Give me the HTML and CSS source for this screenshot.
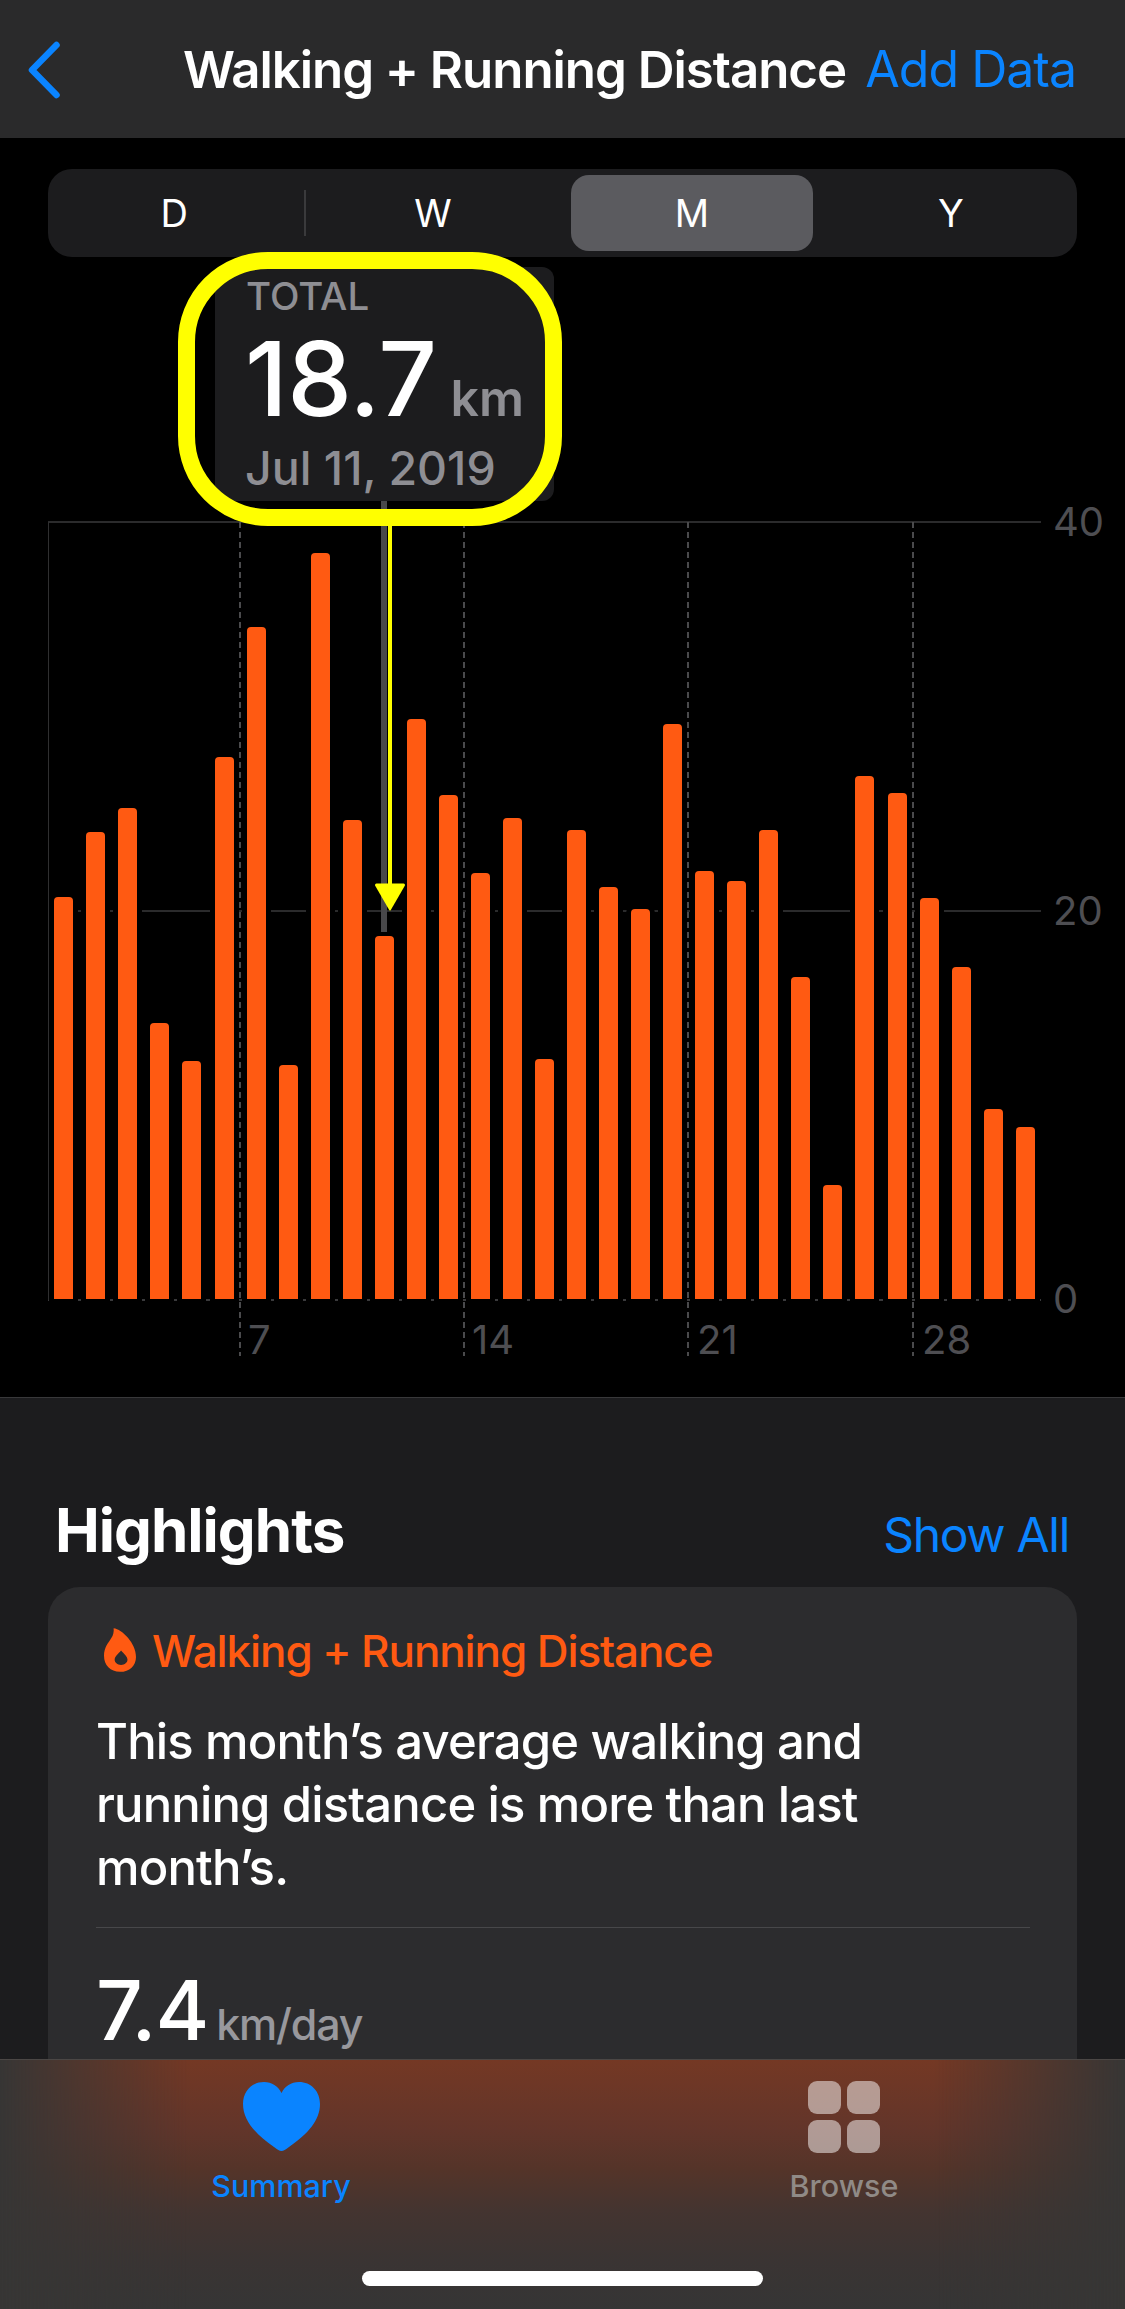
FILE: index.html
```html
<!DOCTYPE html>
<html lang="en">
<head>
<meta charset="utf-8">
<title>Walking + Running Distance</title>
<link rel="stylesheet" href="styles.css">
</head>
<body>
<div class="screen">
  <header class="nav">
    <svg class="back" viewBox="0 0 34 58" aria-hidden="true"><path d="M29.5 4 L5 29 L29.5 54"/></svg>
    <h1 class="nav-title">Walking + Running Distance</h1>
    <a class="nav-action">Add Data</a>
  </header>

  <section class="chart-area">
    <div class="segments">
      <span class="seg">D</span>
      <span class="seg">W</span>
      <span class="seg seg-on">M</span>
      <span class="seg">Y</span>
      <i class="seg-sep"></i>
    </div>

    <div class="tooltip">
      <div class="tip-label">TOTAL</div>
      <div class="tip-value"><span class="tip-num">18.7</span><span class="tip-unit">km</span></div>
      <div class="tip-date">Jul 11, 2019</div>
    </div>
    <div class="ring"></div>

    <div class="plot">
      <i class="hline hline-top"></i>
      <i class="hline hline-mid"></i>
      <i class="hline hline-base"></i>
      <i class="yaxis"></i>
      <div class="bars">
        <b class="bar" style="height:402px"></b>
        <b class="bar" style="height:467px"></b>
        <b class="bar" style="height:491px"></b>
        <b class="bar" style="height:276px"></b>
        <b class="bar" style="height:238px"></b>
        <b class="bar" style="height:542px"></b>
        <b class="bar" style="height:672px"></b>
        <b class="bar" style="height:234px"></b>
        <b class="bar" style="height:746px"></b>
        <b class="bar" style="height:479px"></b>
        <b class="bar" style="height:363px"></b>
        <b class="bar" style="height:580px"></b>
        <b class="bar" style="height:504px"></b>
        <b class="bar" style="height:426px"></b>
        <b class="bar" style="height:481px"></b>
        <b class="bar" style="height:240px"></b>
        <b class="bar" style="height:469px"></b>
        <b class="bar" style="height:412px"></b>
        <b class="bar" style="height:390px"></b>
        <b class="bar" style="height:575px"></b>
        <b class="bar" style="height:428px"></b>
        <b class="bar" style="height:418px"></b>
        <b class="bar" style="height:469px"></b>
        <b class="bar" style="height:322px"></b>
        <b class="bar" style="height:114px"></b>
        <b class="bar" style="height:523px"></b>
        <b class="bar" style="height:506px"></b>
        <b class="bar" style="height:401px"></b>
        <b class="bar" style="height:332px"></b>
        <b class="bar" style="height:190px"></b>
        <b class="bar" style="height:172px"></b>
      </div>
      <i class="vline v7"></i>
      <i class="vline v14"></i>
      <i class="vline v21"></i>
      <i class="vline v28"></i>
      <span class="ylabel y40">40</span>
      <span class="ylabel y20">20</span>
      <span class="ylabel y0">0</span>
      <span class="xlabel x7">7</span>
      <span class="xlabel x14">14</span>
      <span class="xlabel x21">21</span>
      <span class="xlabel x28">28</span>
      <i class="cursor"></i>
      <svg class="arrow" viewBox="0 0 32 386" aria-hidden="true">
        <rect x="14" y="0" width="4" height="362"/>
        <path d="M2.5 357.5 H29.5 a1.5 1.5 0 0 1 1.3 2.2 L16.8 384 a1 1 0 0 1 -1.6 0 L1.2 359.7 a1.5 1.5 0 0 1 1.3 -2.2 Z"/>
      </svg>
    </div>
  </section>

  <section class="content">
    <div class="section-head">
      <h2 class="section-title">Highlights</h2>
      <a class="section-link">Show All</a>
    </div>
    <article class="card">
      <div class="card-head">
        <svg class="flame" viewBox="0 0 30 41" aria-hidden="true"><path fill-rule="evenodd" d="M9 0 C17 1 30 14 30 27 C30 35 24 41 15 41 C6 41 0 35 0 26 C0 18 4 14 7 9 C8.500 7 9.500 3 9 0 Z M16 21 C13.500 24 10 26.500 10 29.500 C10 32.500 12.500 34.500 16 34.500 C19.500 34.500 22 32.500 22 29.500 C22 26.500 18.500 24 16 21 Z"/></svg>
        <span class="card-kicker">Walking + Running Distance</span>
      </div>
      <p class="card-text">This month’s average walking and running distance is more than last month’s.</p>
      <hr class="card-rule">
      <div class="stat"><span class="stat-num">7.4</span><span class="stat-unit">km/day</span></div>
    </article>
  </section>

  <nav class="tabbar">
    <a class="tab tab-on">
      <svg class="tab-icon heart" viewBox="0 0 77 69" aria-hidden="true"><path d="M38.500 69 C36.500 69 34.500 67.500 31 65 C12 52 0 38 0 22 C0 9 9 0 21 0 C29 0 35 4 38.500 11 C42 4 48 0 56 0 C68 0 77 9 77 22 C77 38 65 52 46 65 C42.500 67.500 40.500 69 38.500 69 Z"/></svg>
      <span class="tab-label">Summary</span>
    </a>
    <a class="tab tab-browse">
      <span class="tab-icon tiles"><i></i><i></i><i></i><i></i></span>
      <span class="tab-label">Browse</span>
    </a>
    <span class="home-bar"></span>
  </nav>
</div>
</body>
</html>
```
FILE: styles.css
```css
* { box-sizing: border-box; }
html, body { margin: 0; padding: 0; background: #000; }
body { font-family: Inter, "Liberation Sans", sans-serif; color: #fff; }
i, b { display: block; }
h1, h2, p { margin: 0; }

.screen {
  width: 1125px;
  height: 2309px;
  display: flex;
  flex-direction: column;
  overflow: hidden;
}

/* navigation */
.nav {
  flex: none;
  height: 138px;
  background: #2a2a2b;
  display: flex;
  align-items: center;
  padding: 0 49px 0 27px;
}
.back { width: 34px; height: 58px; flex: none; margin-top: 1px; }
.back path { fill: none; stroke: #0a84ff; stroke-width: 6.5; stroke-linecap: round; stroke-linejoin: round; }
.nav-title {
  font-size: 51px;
  font-weight: 600;
  margin-left: 122px;
  white-space: nowrap;
  letter-spacing: -1.05px;
}
.nav-action { margin-left: auto; font-size: 50px; letter-spacing: -1px; color: #0a84ff; white-space: nowrap; }

/* chart */
.chart-area {
  flex: none;
  height: 1259px;
  background: #000;
  position: relative;
  padding: 31px 48px 0;
}
.segments {
  height: 88px;
  background: #1c1c1e;
  border-radius: 24px;
  display: flex;
  align-items: center;
  gap: 16.500px;
  padding: 0 5px;
  position: relative;
}
.seg {
  flex: 1;
  font-size: 38px;
  text-align: center;
  line-height: 76px;
  height: 76px;
  border-radius: 18px;
}
.seg-on { background: #5b5b5f; }
.seg-sep { position: absolute; left: 256px; top: 21px; width: 2px; height: 46px; background: #3a3a3c; }

.tooltip {
  position: absolute;
  left: 215px;
  top: 129px;
  width: 339px;
  height: 234px;
  background: #1c1c1e;
  border-radius: 12px;
  padding: 7px 0 0 30px;
}
.tip-label { font-size: 38.500px; font-weight: 500; color: #8e8e93; line-height: 44px; margin-left: 1px; }
.tip-value { display: flex; align-items: baseline; line-height: 96px; margin-top: 13px; }
.tip-num { font-size: 103px; font-weight: 500; letter-spacing: -0.5px; }
.tip-unit { font-size: 50px; font-weight: 600; color: #8e8e93; margin-left: 14px; }
.tip-date { font-size: 46.500px; font-weight: 500; color: #8e8e93; line-height: 44px; }
.ring {
  position: absolute;
  left: 178px;
  top: 114px;
  width: 384px;
  height: 274px;
  border: 17px solid #ffff00;
  border-radius: 90px;
  z-index: 3;
}

.plot {
  position: relative;
  margin-top: 265px;
  width: 993px;
  height: 777px;
}
.bars {
  position: relative;
  z-index: 1;
  height: 777px;
  display: flex;
  align-items: flex-end;
  gap: 13.05px;
  padding-left: 6.300px;
}
.bar {
  width: 19px;
  flex: none;
  background: #ff5a12;
  border-radius: 4px 4px 0 0;
  box-shadow: 0 0 0 5px #000;
}
.hline { position: absolute; left: 0; width: 993px; height: 2px; background: #2b2b2c; z-index: 0; }
.hline-top { top: -1px; }
.hline-mid { top: 388px; }
.hline-base { top: 777px; background: #3a3a3c; }
.yaxis { position: absolute; left: 0; top: 0; width: 1px; height: 778px; background: #2f2f30; z-index: 2; }
.vline {
  position: absolute;
  top: 0;
  width: 2px;
  height: 834px;
  z-index: 2;
  background: repeating-linear-gradient(to bottom, #4a4a4c 0, #4a4a4c 6px, transparent 6px, transparent 10px);
}
.v7 { left: 191px; }
.v14 { left: 415px; }
.v21 { left: 639px; }
.v28 { left: 864px; }
.ylabel, .xlabel { position: absolute; font-size: 40px; line-height: 44px; color: #4e4e52; }
.ylabel { left: 1005px; }
.y40 { top: -22px; }
.y20 { top: 367px; }
.y0 { top: 755px; }
.xlabel { top: 796px; }
.x7 { left: 200px; }
.x14 { left: 424px; }
.x21 { left: 649px; }
.x28 { left: 874px; }

.cursor { position: absolute; left: 333px; top: -21px; width: 6px; height: 431px; background: #48484a; z-index: 2; }
.arrow { position: absolute; left: 326px; top: 4px; width: 32px; height: 386px; z-index: 4; fill: #ffff00; }

/* highlights */
.content {
  flex: 1;
  min-height: 0;
  overflow: hidden;
  background: #1c1c1e;
  border-top: 1px solid #38383a;
  padding: 0 48px;
}
.section-head {
  display: flex;
  justify-content: space-between;
  align-items: baseline;
  height: 189px;
  padding: 97px 8px 0 7px;
}
.section-title { font-size: 60px; font-weight: 700; letter-spacing: -1px; line-height: 70px; }
.section-link { font-size: 48px; letter-spacing: -1.300px; color: #0a84ff; }
.card {
  background: #2c2c2e;
  border-radius: 32px;
  padding: 38px 47px 0 48px;
  height: 600px;
}
.card-head { display: flex; align-items: center; height: 52px; }
.flame { width: 32px; height: 44px; fill: #ff5a12; flex: none; margin: -2px 0 0 8px; }
.card-kicker { font-size: 44px; font-weight: 500; letter-spacing: -1.100px; color: #ff5a12; margin-left: 16px; white-space: nowrap; }
.card-text { font-size: 49px; font-weight: 500; letter-spacing: -0.85px; line-height: 63px; margin-top: 33px; }
.card-rule { border: 0; height: 1px; background: #48484a; margin: 28px 0 0; }
.stat { display: flex; align-items: baseline; margin-top: 35px; line-height: 96px; }
.stat-num { font-size: 82px; font-weight: 500; letter-spacing: -1px; }
.stat-unit { font-size: 43px; font-weight: 500; letter-spacing: -1.200px; color: #98989d; margin-left: 8px; }

/* tab bar */
.tabbar {
  flex: none;
  height: 250px;
  position: relative;
  overflow: hidden;
  background: #373635;
  border-top: 1px solid #4b4745;
  display: flex;
}
.tabbar::before {
  content: "";
  position: absolute;
  inset: 0;
  background: linear-gradient(to bottom, #743824 0, #62352a 70px, #543429 110px, #443430 150px, #3a3433 200px, #353535 250px);
  -webkit-mask-image: linear-gradient(to right, transparent 0, #000 17%, #000 83%, transparent 100%);
  mask-image: linear-gradient(to right, transparent 0, #000 17%, #000 83%, transparent 100%);
}
.tab {
  position: relative;
  flex: none;
  width: 562px;
  display: flex;
  flex-direction: column;
  align-items: center;
  color: #908a86;
  padding-top: 21px;
}
.tab-browse { width: 564px; }
.tab-on { color: #0a84ff; }
.tab-icon { height: 72px; flex: none; }
.heart { width: 77px; height: 69px; fill: #0a84ff; margin: 1px 0 2px; }
.tiles { width: 72px; display: grid; grid-template-columns: 33px 33px; grid-template-rows: 33px 33px; gap: 6px; }
.tiles i { border-radius: 9px; background: rgba(255, 255, 255, 0.5); }
.tab-label { font-size: 30.500px; font-weight: 500; line-height: 36px; margin-top: 15px; }
.home-bar {
  position: absolute;
  left: 362px;
  top: 211px;
  width: 401px;
  height: 15px;
  background: #fff;
  border-radius: 8px;
}
```
